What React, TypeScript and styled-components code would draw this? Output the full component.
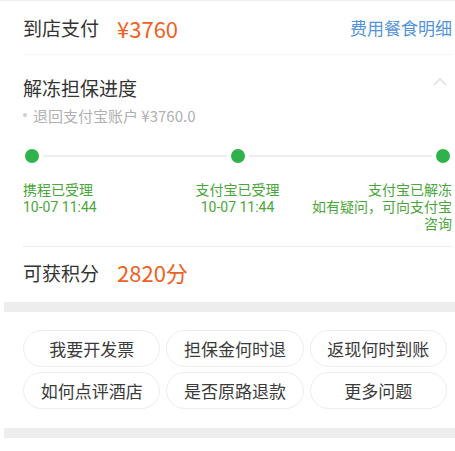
import React from "react";
import styled, { createGlobalStyle } from "styled-components";

const GlobalStyle = createGlobalStyle`
  html, body {
    margin: 0;
    padding: 0;
    background: #fff;
  }
  body {
    font-family: "Noto Sans CJK SC", "Noto Sans", sans-serif;
    color: #333;
  }
`;

const steps = [
  { align: "left", lines: ["携程已受理", "10-07 11:44"] },
  { align: "center", lines: ["支付宝已受理", "10-07 11:44"] },
  { align: "right", lines: ["支付宝已解冻", "如有疑问，可向支付宝", "咨询"] },
] as const;

const questions = [
  "我要开发票",
  "担保金何时退",
  "返现何时到账",
  "如何点评酒店",
  "是否原路退款",
  "更多问题",
];

const App = () => {
  return (
    <Page>
      <GlobalStyle />
      <TopRule />
      <Content>
        <PayRow>
          <RowLabel>到店支付</RowLabel>
          <Amount>¥3760</Amount>
          <DetailLink href="#">费用餐食明细</DetailLink>
        </PayRow>

        <Progress>
          <TitleRow>
            <SectionTitle>解冻担保进度</SectionTitle>
            <Chevron width="14" height="9" viewBox="0 0 14 9">
              <path d="M1 8 L7 2 L13 8" fill="none" stroke="#e2e2e2" strokeWidth="1.6" />
            </Chevron>
          </TitleRow>
          <RefundLine>
            <Bullet />
            退回支付宝账户 ¥3760.0
          </RefundLine>

          <Track>
            <Dot />
            <TrackLine />
            <Dot />
            <TrackLine />
            <Dot />
          </Track>

          <StepGrid>
            {steps.map((s, i) => (
              <StepText key={i} $align={s.align}>
                {s.lines.map((l) => (
                  <div key={l}>{l}</div>
                ))}
              </StepText>
            ))}
          </StepGrid>
        </Progress>

        <PointsRow>
          <RowLabel>可获积分</RowLabel>
          <Amount>2820分</Amount>
        </PointsRow>
      </Content>

      <Band />

      <PillGrid>
        {questions.map((q) => (
          <Pill key={q}>{q}</Pill>
        ))}
      </PillGrid>

      <Band />
    </Page>
  );
};

export default App;

const Page = styled.div`
  width: 455px;
  height: 451px;
  overflow: hidden;
  background: #fff;
`;

const TopRule = styled.div`
  height: 1px;
  background: #efefef;
`;

const Content = styled.div`
  padding: 0 3px 0 23px;
`;

const PayRow = styled.div`
  display: flex;
  align-items: center;
  height: 53px;
`;

const RowLabel = styled.span`
  font-size: 19px;
  color: #333;
`;

const Amount = styled.span`
  margin-left: 18px;
  font-size: 22px;
  color: #f0601e;
`;

const DetailLink = styled.a`
  margin-left: auto;
  font-size: 17px;
  color: #5393da;
  text-decoration: none;
`;

const Progress = styled.div`
  border-top: 1px solid #f6f6f6;
  border-bottom: 1px solid #ececec;
  padding-bottom: 13px;
`;

const TitleRow = styled.div`
  display: flex;
  align-items: center;
  justify-content: space-between;
  padding-top: 20px;
  height: 24px;
`;

const SectionTitle = styled.span`
  font-size: 19px;
  color: #333;
`;

const Chevron = styled.svg`
  margin-right: 5px;
  margin-top: -12px;
`;

const RefundLine = styled.div`
  display: flex;
  align-items: center;
  margin-top: 6px;
  height: 20px;
  font-size: 15px;
  color: #b0b0b0;
`;

const Bullet = styled.span`
  width: 4px;
  height: 4px;
  border-radius: 50%;
  background: #d0d0d0;
  margin-right: 6px;
`;

const Track = styled.div`
  display: flex;
  align-items: center;
  padding: 0 2px;
  margin-top: 24px;
`;

const Dot = styled.span`
  width: 14px;
  height: 14px;
  border-radius: 50%;
  background: #2fb24c;
  flex: none;
`;

const TrackLine = styled.span`
  flex: 1;
  height: 2px;
  margin: 0 4px;
  background: #eeeeee;
`;

const StepGrid = styled.div`
  display: grid;
  grid-template-columns: 1fr 1fr 1fr;
  margin-top: 19px;
`;

const StepText = styled.div<{ $align: "left" | "center" | "right" }>`
  text-align: ${(p) => p.$align};
  font-family: Roboto, "Noto Sans CJK SC", sans-serif;
  font-size: 14px;
  line-height: 17px;
  color: #4aa63a;
  white-space: nowrap;
`;

const PointsRow = styled.div`
  display: flex;
  align-items: center;
  height: 50px;
  padding-bottom: 5px;
`;

const Band = styled.div`
  height: 10px;
  margin-left: 4px;
  background: #ededed;
`;

const PillGrid = styled.div`
  display: grid;
  grid-template-columns: repeat(3, 1fr);
  column-gap: 6px;
  row-gap: 5px;
  padding: 18px 8px 19px 23px;
`;

const Pill = styled.div`
  height: 35px;
  display: flex;
  align-items: center;
  justify-content: center;
  border: 1px solid #ededed;
  border-radius: 19px;
  font-size: 17px;
  color: #3a3a3a;
`;
